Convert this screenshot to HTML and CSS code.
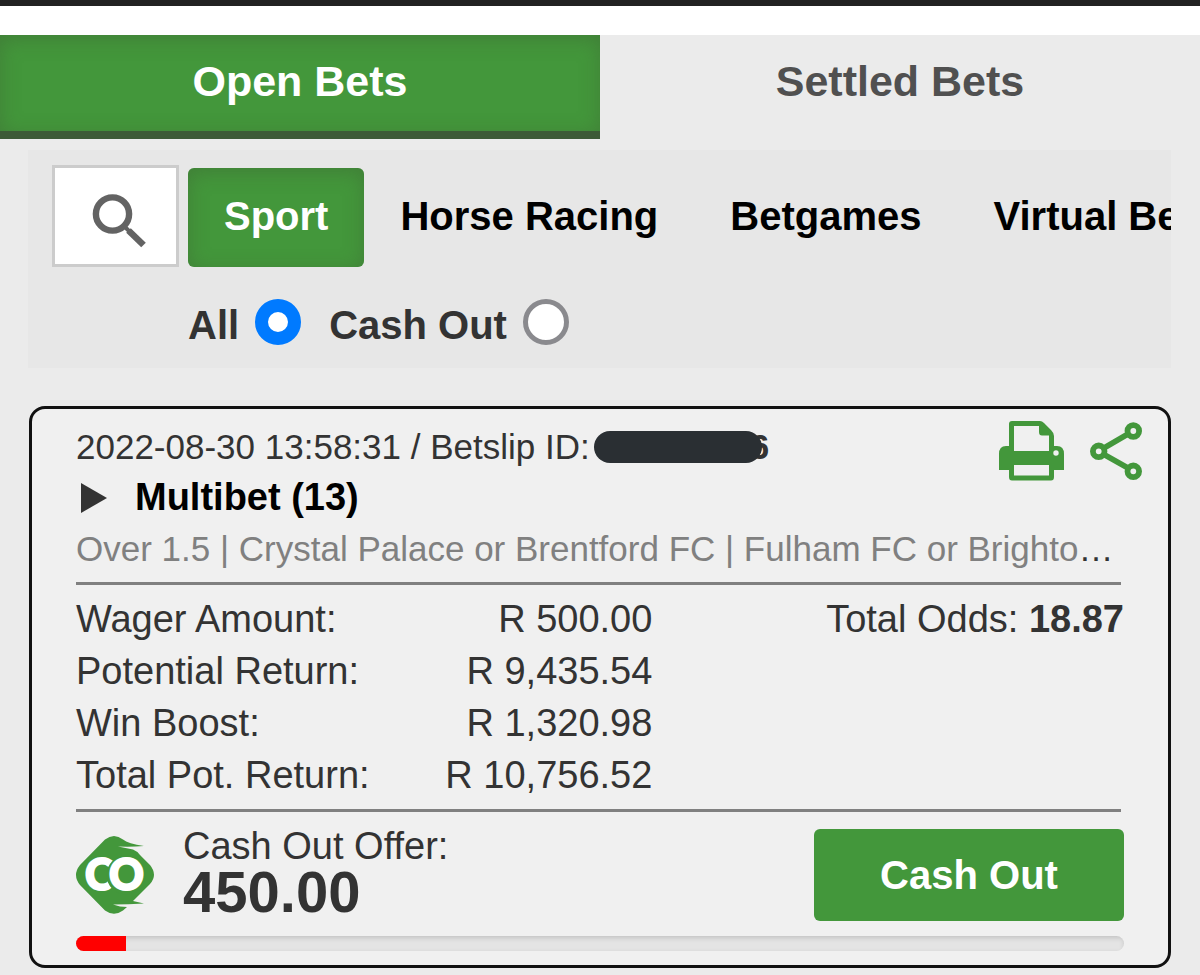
FILE: index.html
```
<!DOCTYPE html>
<html lang="en">

<head>
    <meta charset="UTF-8">
    <meta name="viewport" content="width=device-width, initial-scale=1.0">
    <title>Open Bets</title>
    <link rel="stylesheet" href="styles.css">
</head>

<body>
    <header class="top-bar"></header>

    <nav class="tabs">
        <button type="button" class="tab active">Open Bets</button>
        <button type="button" class="tab">Settled Bets</button>
    </nav>

    <section class="filters">
        <div class="categories">
            <button type="button" class="search" aria-label="Search">
                <svg width="54" height="54" viewBox="0 0 54 54" fill="none" stroke="#636363">
                    <circle cx="20.5" cy="20" r="16.6" stroke-width="6.4" />
                    <path d="M32 32 L38 38" stroke-width="4" />
                    <path d="M36.5 36.5 L51.5 51" stroke-width="6.6" />
                </svg>
            </button>
            <button type="button" class="category active">Sport</button>
            <button type="button" class="category">Horse Racing</button>
            <button type="button" class="category">Betgames</button>
            <button type="button" class="category">Virtual Bets</button>
        </div>
        <div class="bet-type">
            <label for="typeAll">All</label>
            <input type="radio" id="typeAll" name="betType" value="all" checked>
            <label for="typeCashOut">Cash Out</label>
            <input type="radio" id="typeCashOut" name="betType" value="cashout">
        </div>
    </section>

    <article class="bet-card">
        <div class="bet-header">
            <div class="bet-title">
                <div class="bet-id">2022-08-30 13:58:31 / Betslip ID:<span class="id-mask"></span><b>6</b></div>
                <button type="button" class="expand">
                    <svg width="26" height="30" viewBox="0 0 26 30">
                        <path d="M0 0 L26 15 L0 30 Z" fill="#333" />
                    </svg>
                    Multibet (13)
                </button>
            </div>
            <div class="actions">
                <button type="button" aria-label="Print">
                    <svg width="65" height="60" viewBox="0 0 65 60">
                        <path fill="#43973b" fill-rule="evenodd" d="M13 0 H41 Q43 0 45 2 L52 9 Q55 12 55 15 V25 H58 Q65 25 65 33 V49 H55 V56 Q55 59.5 52 59.5 H13 Q10 59.5 10 56 V49 H0 V33 Q0 25 7 25 H10 V3 Q10 0 13 0 Z M15 5 V30 H50 V14.5 H43 Q40 14.5 40 11 V5 Z M15 44 V54.5 H50 V44 Z M57 29.3 A2.7 2.7 0 1 0 57 34.7 A2.7 2.7 0 1 0 57 29.3 Z" />
                    </svg>
                </button>
                <button type="button" aria-label="Share">
                    <svg width="52" height="58" viewBox="0 0 52 58" fill="none" stroke="#43973b">
                        <path d="M38 12 L14 26 M14 32.5 L38 46" stroke-width="5.5" />
                        <circle cx="43.3" cy="9" r="5.8" stroke-width="5.8" />
                        <circle cx="8.7" cy="29.3" r="5.8" stroke-width="5.8" />
                        <circle cx="43.3" cy="49.3" r="5.8" stroke-width="5.8" />
                    </svg>
                </button>
            </div>
        </div>
        <div class="selections"><span>Over 1.5 | Crystal Palace or Brentford FC | Fulham FC or Brighton &amp; Hove Albion</span></div>

        <hr>

        <div class="summary">
            <table class="amounts">
                <tr>
                    <th>Wager Amount:</th>
                    <td>R 500.00</td>
                </tr>
                <tr>
                    <th>Potential Return:</th>
                    <td>R 9,435.54</td>
                </tr>
                <tr>
                    <th>Win Boost:</th>
                    <td>R 1,320.98</td>
                </tr>
                <tr>
                    <th>Total Pot. Return:</th>
                    <td>R 10,756.52</td>
                </tr>
            </table>
            <div class="odds">Total Odds: <b>18.87</b></div>
        </div>

        <hr>

        <div class="cash-out">
            <svg class="co-logo" width="78" height="78" viewBox="0 0 78 78">
                <path fill="#43973b" d="M29 3.5 Q38 -3.5 47 3.5 Q52 7.500 68 10 Q56 11 42 10.5 L57 13.5 Q61 15 64 19 L74 29 Q82 39 74 48 L57 65 L68 67.5 Q52 68.5 37 68.5 Q44 71 51 71 L47 74.5 Q38 81 29 74.5 L4 49 Q-4 39 4 29 Z" />
                <text class="co-text" x="9" y="54">C</text>
                <circle cx="50" cy="39" r="19.5" fill="#43973b" />
                <text class="co-text" x="33" y="54">O</text>
            </svg>
            <div class="offer">
                <div class="offer-label">Cash Out Offer:</div>
                <div class="offer-amount">450.00</div>
            </div>
            <button type="button" class="cash-out-btn">Cash Out</button>
        </div>
        <progress class="offer-progress" value="48" max="1000" aria-label="Cash out progress"></progress>
    </article>
</body>

</html>
```

FILE: styles.css
```
* {
    box-sizing: border-box;
}

body {
    margin: 0;
    font-family: "Liberation Sans", Arial, sans-serif;
    font-size: 38px;
    color: #333;
    background-color: #ebebeb;
}

button {
    font-family: inherit;
    border: none;
    background: none;
    padding: 0;
    cursor: pointer;
}

svg {
    display: block;
}

.top-bar {
    height: 35px;
    background-color: #fff;
    border-top: 6px solid #222;
}

/* tabs */
.tabs {
    display: flex;
}

.tab {
    flex: 1;
    font-size: 43px;
    font-weight: bold;
    line-height: 92px;
    padding-bottom: 4px;
    color: #505050;
    border-bottom: 8px solid transparent;
}

.tab.active {
    color: #fff;
    background-color: #43973b;
    border-bottom-color: #3d5a37;
    box-shadow: inset 0 4px 20px rgba(60, 80, 50, 0.35);
}

/* filters */
.filters {
    margin: 11px 29px 38px 28px;
    padding: 15px 0 17px 24px;
    background-color: #e7e7e7;
    overflow: hidden;
}

.categories {
    display: flex;
    align-items: flex-end;
}

.search {
    flex-shrink: 0;
    margin-right: 9px;
    padding: 26px 30px 16px 37px;
    background-color: #fff;
    border: 3px solid #ccc;
}

.category {
    flex-shrink: 0;
    padding: 0 36px 3px;
    font-size: 40px;
    font-weight: bold;
    line-height: 96px;
    color: #000;
    border-radius: 6px;
}

.category.active {
    color: #fff;
    background-color: #43973b;
    box-shadow: inset 0 4px 20px rgba(60, 80, 50, 0.35);
}

.bet-type {
    display: flex;
    align-items: flex-start;
    margin-top: 32px;
    padding-left: 136px;
    font-size: 40px;
    font-weight: bold;
    line-height: 52px;
}

.bet-type input {
    appearance: none;
    width: 46px;
    height: 46px;
    margin: 0 28px 0 16px;
    border: 5px solid #8a8a8e;
    border-radius: 50%;
    background-color: #fff;
}

.bet-type input:checked {
    border: 13px solid #007aff;
}

/* bet card */
.bet-card {
    margin: 0 29px 7px;
    padding: 12px 44px 14px;
    background-color: #f0f0f0;
    border: 3px solid #111;
    border-radius: 16px;
}

.bet-header {
    display: flex;
    justify-content: space-between;
    align-items: flex-start;
}

.bet-id {
    display: flex;
    align-items: center;
    font-size: 35px;
    line-height: 51px;
}

.id-mask {
    position: relative;
    width: 168px;
    height: 32px;
    margin: 0 -12px 0 4px;
    border-radius: 16px;
    background-color: #2a2f33;
}

.expand {
    display: flex;
    align-items: center;
    gap: 28px;
    padding-left: 5px;
    font-size: 38px;
    font-weight: bold;
    line-height: 51px;
    color: #000;
}

.actions {
    display: flex;
    align-items: center;
    gap: 26px;
    margin-right: -18px;
}

.selections {
    font-size: 35px;
    line-height: 51px;
    white-space: nowrap;
    overflow: hidden;
    text-overflow: ellipsis;
}

.selections span {
    color: #808080;
}

hr {
    height: 3px;
    margin: 8px 3px 8px 0;
    border: none;
    background-color: #808080;
}

.summary {
    display: flex;
    justify-content: space-between;
    line-height: 52px;
}

.amounts {
    width: 55%;
    border-collapse: collapse;
}

.amounts th,
.amounts td {
    padding: 0;
}

.amounts th {
    font-weight: normal;
    text-align: left;
}

.amounts td {
    text-align: right;
}

/* cash out */
.cash-out {
    display: flex;
    align-items: center;
    margin-top: 17px;
}

.co-text {
    font-family: Lato, sans-serif;
    font-size: 43px;
    font-weight: 900;
    fill: #fff;
    stroke: #fff;
    stroke-width: 2px;
}

.offer {
    margin-left: 29px;
    flex: 1;
}

.offer-label {
    line-height: 34px;
}

.offer-amount {
    font-size: 58px;
    font-weight: bold;
    line-height: 58px;
}

.cash-out-btn {
    width: 310px;
    font-size: 40px;
    font-weight: bold;
    line-height: 92px;
    color: #fff;
    background-color: #43973b;
    border-radius: 6px;
}

.offer-progress {
    appearance: none;
    display: block;
    width: 100%;
    height: 15px;
    margin-top: 15px;
    border: none;
    border-radius: 8px;
    overflow: hidden;
}

.offer-progress::-webkit-progress-bar {
    background-color: #e4e4e4;
    box-shadow: inset 0 2px 5px rgba(0, 0, 0, 0.15);
}

.offer-progress::-webkit-progress-value {
    background-color: #f00;
}
```
